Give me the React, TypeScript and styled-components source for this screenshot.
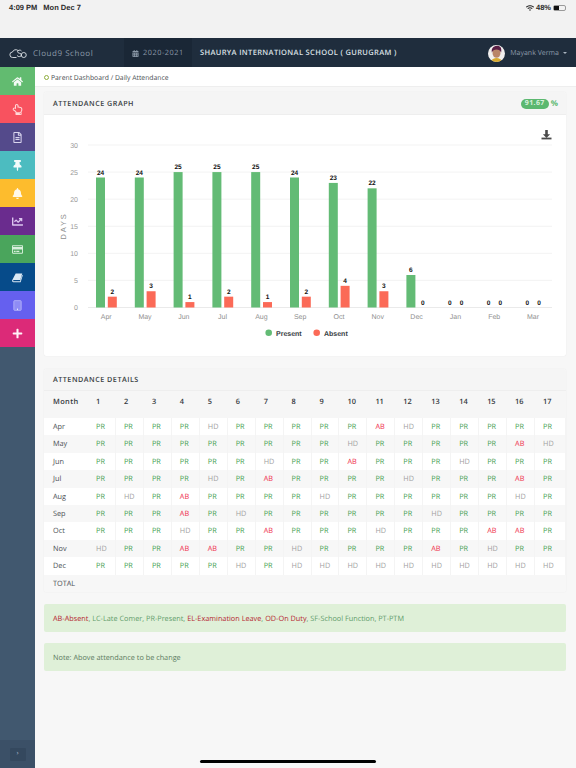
import styled, { createGlobalStyle } from 'styled-components';
import {
  FaBell,
  FaCalendarAlt,
  FaChartLine,
  FaHome,
  FaPlus,
  FaRegCreditCard,
  FaRegFileAlt,
  FaRegHandPointUp,
  FaThumbtack,
  FaWifi,
} from 'react-icons/fa';

const GlobalStyle = createGlobalStyle`
  html, body {
    margin: 0;
    padding: 0;
    background: #f7f7f7;
    font-family: "Open Sans", "Liberation Sans", sans-serif;
    text-rendering: geometricPrecision;
    -webkit-font-smoothing: antialiased;
  }
`;

const Page = styled.div`
  position: relative;
  width: 576px;
  height: 768px;
  overflow: hidden;
  display: flex;
  flex-direction: column;
`;

const StatusBar = styled.div`
  height: 38px;
  flex: none;
  box-sizing: border-box;
  padding: 3px 10px 0 9px;
  background: #f2f2f2;
  display: flex;
  justify-content: space-between;
  align-items: flex-start;
  font-family: "Liberation Sans", sans-serif;
  font-size: 7.5px;
  line-height: 9px;
  font-weight: 700;
  color: #2b2b2b;
`;

const StatusGroup = styled.div`
  display: flex;
  align-items: center;
  gap: ${(p: { $gap: number }) => p.$gap}px;
`;

const Battery = styled.span`
  position: relative;
  width: 13px;
  height: 6px;
  box-sizing: border-box;
  border: 1px solid #9a9a9a;
  border-radius: 2px;
  display: block;
  &::before {
    content: '';
    display: block;
    width: 5px;
    height: 4px;
    background: #111;
  }
`;

const TopBar = styled.header`
  height: 29px;
  flex: none;
  background: #1f2d3d;
  display: flex;
  align-items: stretch;
`;

const Brand = styled.div`
  width: 124px;
  box-sizing: border-box;
  padding: 1px 0 0 9px;
  display: flex;
  align-items: center;
  gap: 6px;
  font-size: 8px;
  letter-spacing: 0.55px;
  color: #8b99a8;
`;

const YearBox = styled.div`
  width: 68px;
  box-sizing: border-box;
  padding: 1px 0 0 8px;
  background: #1a2736;
  display: flex;
  align-items: center;
  gap: 4px;
  font-size: 7.3px;
  letter-spacing: 0.55px;
  color: #8b99a8;
  svg {
    width: 7px;
    height: 7px;
  }
`;

const SchoolName = styled.div`
  flex: 1;
  padding: 1px 0 0 8px;
  display: flex;
  align-items: center;
  font-size: 7.5px;
  font-weight: 600;
  letter-spacing: 0.35px;
  color: #dde2e7;
`;

const UserMenu = styled.div`
  padding: 1px 9px 0 0;
  display: flex;
  align-items: center;
  font-size: 7px;
  color: #8b99a8;
`;

const Avatar = styled.svg`
  width: 17px;
  height: 17px;
  margin-right: 5px;
  border-radius: 50%;
`;

const Caret = styled.span`
  margin-left: 4px;
  width: 0;
  height: 0;
  border-left: 2px solid transparent;
  border-right: 2px solid transparent;
  border-top: 2px solid #a9b4bf;
`;

const Body = styled.div`
  flex: 1;
  display: flex;
  min-height: 0;
`;

const Sidebar = styled.nav`
  width: 35px;
  flex: none;
  background: #41586f;
  display: flex;
  flex-direction: column;
`;

const SideItem = styled.div<{ $bg: string; $fg: string }>`
  height: 28px;
  flex: none;
  background: ${(p) => p.$bg};
  color: ${(p) => p.$fg};
  display: flex;
  align-items: center;
  justify-content: center;
  svg {
    width: 11px;
    height: 11px;
  }
`;

const SideFooter = styled.div`
  margin-top: auto;
  height: 28px;
  background: #3b5067;
  display: flex;
  align-items: center;
  justify-content: center;
`;

const ToggleButton = styled.div`
  width: 16px;
  height: 13px;
  border-radius: 1px;
  background: #34485e;
  color: #a8b6c4;
  font-size: 7px;
  line-height: 12px;
  text-align: center;
`;

const Main = styled.main`
  flex: 1;
  min-width: 0;
  display: flex;
  flex-direction: column;
`;

const Crumbs = styled.div`
  height: 20px;
  flex: none;
  box-sizing: border-box;
  padding: 1px 0 0 9px;
  background: #fff;
  border-bottom: 1px solid #eeeeee;
  display: flex;
  align-items: center;
  gap: 2px;
  font-size: 6.8px;
  color: #4b4f53;
`;

const CrumbDot = styled.span`
  width: 5px;
  height: 5px;
  box-sizing: border-box;
  border: 1px solid #8fae3f;
  border-radius: 50%;
`;

const Content = styled.div`
  padding: 5px 10px 0 9px;
  display: flex;
  flex-direction: column;
`;

const Panel = styled.section<{ $mb: number }>`
  margin-bottom: ${(p) => p.$mb}px;
  background: #fff;
  border-radius: 2px;
  box-shadow: 0 0 1px rgba(0, 0, 0, 0.12);
  overflow: hidden;
`;

const PanelHead = styled.div<{ $h: number }>`
  height: ${(p) => p.$h}px;
  box-sizing: border-box;
  padding: 1px 8px 0 9px;
  background: #f5f5f5;
  border-bottom: 1px solid #eeeeee;
  display: flex;
  align-items: center;
  justify-content: space-between;
`;

const PanelTitle = styled.h3`
  margin: 0;
  font-size: 7.2px;
  font-weight: 600;
  letter-spacing: 0.5px;
  color: #3a3f44;
`;

const Percent = styled.div`
  display: flex;
  align-items: center;
  gap: 2px;
  font-size: 8px;
  font-weight: 700;
  color: #5cb870;
`;

const Pill = styled.span`
  height: 10px;
  padding: 0 4px;
  border-radius: 5px;
  background: #5cb870;
  color: #d8f0dd;
  font-size: 7px;
  line-height: 10px;
  letter-spacing: 0.4px;
`;

const ChartSvg = styled.svg`
  display: block;
  width: 522px;
  height: 241px;
  font-family: "Liberation Sans", sans-serif;
`;

const AttendanceGrid = styled.div`
  display: grid;
  grid-template-columns: 44px repeat(16, 27.94px) 1fr;
  grid-template-rows: 27px;
  grid-auto-rows: 17.4px;
  background: #f6f6f6;
  font-size: 7.3px;
`;

const HeadCell = styled.div<{ $first?: boolean }>`
  box-sizing: border-box;
  padding: 6px 0 0 ${(p) => (p.$first ? 9 : 8)}px;
  font-size: 7.4px;
  line-height: 11px;
  font-weight: 600;
  letter-spacing: ${(p) => (p.$first ? 0.4 : 0)}px;
  color: #33383d;
`;

const MonthCell = styled.div<{ $odd: boolean }>`
  box-sizing: border-box;
  padding: 1px 0 0 9px;
  line-height: 17.4px;
  background: ${(p) => (p.$odd ? '#ffffff' : '#f7f7f7')};
  color: #4a4f54;
`;

const statusColor: Record<string, string> = {
  PR: '#43a04f',
  AB: '#ef2f4d',
  HD: '#a0a0a0',
};

const DayCell = styled.div<{ $odd: boolean; $status: string }>`
  box-sizing: border-box;
  padding: 1px 0 0 8px;
  line-height: 17.4px;
  font-weight: 500;
  background: ${(p) => (p.$odd ? '#ffffff' : '#f7f7f7')};
  border-right: 1px solid #f4f4f4;
  color: ${(p) => statusColor[p.$status]};
`;

const TotalRow = styled.div`
  grid-column: 1 / -1;
  box-sizing: border-box;
  padding: 1px 0 0 9px;
  line-height: 17.4px;
  background: #f7f7f7;
  color: #4a4f54;
`;

const Alert = styled.div<{ $mb: number }>`
  height: 28.5px;
  box-sizing: border-box;
  margin-bottom: ${(p) => p.$mb}px;
  padding: 1px 0 0 9px;
  background: #dff0d8;
  border-radius: 2px;
  display: flex;
  align-items: center;
  font-size: 7.3px;
  color: #5f9c6b;
  white-space: pre;
`;

const Danger = styled.span`
  color: #b5252f;
`;

const Note = styled.span`
  color: #5d7b62;
`;

const HomeBar = styled.div`
  position: absolute;
  left: 200px;
  bottom: 5px;
  width: 176px;
  height: 3px;
  border-radius: 2px;
  background: #000;
`;

const BookIcon = () => (
  <svg viewBox="0 0 12 12" fill="currentColor">
    <path d="M4 1.5h7.2L9 8.6H2.2c-.9 0-1.4.9-.8 1.5h7.3l2.5-7 .6.5-2.4 7.6H1.5C.4 11.2-.2 10 .3 8.8z" />
  </svg>
);

const TabletIcon = () => (
  <svg viewBox="0 0 12 12">
    <rect x="2" y="0.7" width="8" height="10.6" rx="0.8" fill="#8f8cf5" stroke="currentColor" strokeWidth="0.9" />
    <circle cx="6" cy="10" r="0.6" fill="#fff" />
  </svg>
);

const menu = [
  { bg: '#62bb70', fg: '#f4fbf5', icon: <FaHome /> },
  { bg: '#f8525f', fg: '#ffd9d9', icon: <FaRegHandPointUp /> },
  { bg: '#544a8b', fg: '#d9d5ee', icon: <FaRegFileAlt /> },
  { bg: '#4cbcc0', fg: '#f3fbfb', icon: <FaThumbtack /> },
  { bg: '#fdbc2d', fg: '#fff8e8', icon: <FaBell /> },
  { bg: '#6a2c8e', fg: '#dcc5ef', icon: <FaChartLine /> },
  { bg: '#4aa55c', fg: '#d8f0dc', icon: <FaRegCreditCard /> },
  { bg: '#064b8a', fg: '#dbe9f5', icon: <BookIcon /> },
  { bg: '#6560ef', fg: '#b9b6fa', icon: <TabletIcon /> },
  { bg: '#dc2a78', fg: '#fff2f7', icon: <FaPlus /> },
];

const months = ['Apr', 'May', 'Jun', 'Jul', 'Aug', 'Sep', 'Oct', 'Nov', 'Dec', 'Jan', 'Feb', 'Mar'];
const present = [24, 24, 25, 25, 25, 24, 23, 22, 6, 0, 0, 0];
const absent = [2, 3, 1, 2, 1, 2, 4, 3, 0, 0, 0, 0];

const rows: [string, string][] = [
  ['Apr', 'PR PR PR PR HD PR PR PR PR PR AB HD PR PR PR PR PR'],
  ['May', 'PR PR PR PR PR PR PR PR PR HD PR PR PR PR PR AB HD'],
  ['Jun', 'PR PR PR PR PR PR HD PR PR AB PR PR PR HD PR PR PR'],
  ['Jul', 'PR PR PR PR HD PR AB PR PR PR PR HD PR PR PR AB PR'],
  ['Aug', 'PR HD PR AB PR PR PR PR HD PR PR PR PR PR PR HD PR'],
  ['Sep', 'PR PR PR AB PR HD PR PR PR PR PR PR HD PR PR PR PR'],
  ['Oct', 'PR PR PR HD PR PR AB PR PR PR HD PR PR PR AB AB PR'],
  ['Nov', 'HD PR PR AB AB PR PR HD PR PR PR PR AB PR HD PR PR'],
  ['Dec', 'PR PR PR PR PR HD PR HD HD HD HD HD HD HD HD HD HD'],
];

const days = Array.from({ length: 17 }, (_, i) => i + 1);

const toY = (v: number) => 307.5 - v * (162.5 / 30);
const STEP = 38.8;

const Logo = () => (
  <svg width="18" height="11" viewBox="0 0 36 22" fill="none" stroke="#dfe4e9" strokeWidth="1.8">
    <path d="M15 19H7.5a5.5 5.5 0 0 1 -.5 -11 A7 7 0 0 1 18 5" />
    <path d="M25 6c-2-3-8-2-8 1.500 0 4 8 2 8 6.500 0 3.500-7 4.500-9 1" />
    <circle cx="29.500" cy="14" r="5" />
  </svg>
);

const Chart = () => (
  <ChartSvg viewBox="44 115 522 241">
    {[0, 5, 10, 15, 20, 25, 30].map((v) => (
      <g key={v}>
        <line x1="88" x2="552" y1={toY(v)} y2={toY(v)} stroke={v === 0 ? '#e4e4e4' : '#f0f0f0'} strokeWidth="0.8" />
        <text x="78" y={toY(v) + 2.5} textAnchor="end" fontSize="7" fill="#9a9a9a">
          {v}
        </text>
      </g>
    ))}
    <text
      transform="translate(66 226) rotate(-90)"
      textAnchor="middle"
      fontSize="7.5"
      letterSpacing="1.8"
      fill="#8e8e8e"
    >
      DAYS
    </text>
    {months.map((m, i) => {
      const gx = 96 + i * STEP;
      const rx = gx + 11.8;
      return (
        <g key={m}>
          <rect x={gx} y={toY(present[i])} width="9" height={present[i] * (162.5 / 30)} fill="#63bb75" />
          <rect x={rx} y={toY(absent[i])} width="9" height={absent[i] * (162.5 / 30)} fill="#fb6a57" />
          <text x={gx + 4.5} y={toY(present[i]) - 3} textAnchor="middle" fontSize="6.5" fontWeight="700" fill="#111">
            {present[i]}
          </text>
          <text x={rx + 4.5} y={toY(absent[i]) - 3} textAnchor="middle" fontSize="6.5" fontWeight="700" fill="#111">
            {absent[i]}
          </text>
          <text x={gx + 10.2} y="318.5" textAnchor="middle" fontSize="7" fill="#8f8f8f">
            {m}
          </text>
        </g>
      );
    })}
    <circle cx="268.7" cy="332.8" r="3.3" fill="#63bb75" />
    <text x="276" y="335.5" fontSize="7" fontWeight="700" fill="#373d3f">
      Present
    </text>
    <circle cx="316.7" cy="332.8" r="3.3" fill="#fb6a57" />
    <text x="324" y="335.5" fontSize="7" fontWeight="700" fill="#373d3f">
      Absent
    </text>
    <path d="M545.2 130h2.6v4.2h2.3l-3.6 3.8-3.6-3.8h2.3z" fill="#4a4a4a" />
    <rect x="541.5" y="137.6" width="10" height="1.8" fill="#4a4a4a" />
  </ChartSvg>
);

const App = () => {
  return (
    <Page>
      <GlobalStyle />
      <StatusBar>
        <StatusGroup $gap={6}>
          <span>4:09 PM</span>
          <span>Mon Dec 7</span>
        </StatusGroup>
        <StatusGroup $gap={2}>
          <FaWifi size={8} />
          <span>48%</span>
          <Battery />
        </StatusGroup>
      </StatusBar>
      <TopBar>
        <Brand>
          <Logo />
          Cloud9 School
        </Brand>
        <YearBox>
          <FaCalendarAlt />
          2020-2021
        </YearBox>
        <SchoolName>SHAURYA INTERNATIONAL SCHOOL ( GURUGRAM )</SchoolName>
        <UserMenu>
          <Avatar viewBox="0 0 17 17">
            <rect width="17" height="17" fill="#f1efee" />
            <ellipse cx="8.5" cy="8" rx="4" ry="4.8" fill="#b98468" />
            <path d="M3.8 7.5C3 2 7 .8 9.5 .8s4.5 2 3.7 6.7c-1-2-2.5-3-4.7-3S4.8 5.5 3.8 7.5z" fill="#5a1f45" />
            <path d="M3 17c.5-3 3-4 5.5-4s5 1 5.5 4z" fill="#d7a92e" />
          </Avatar>
          Mayank Verma
          <Caret />
        </UserMenu>
      </TopBar>
      <Body>
        <Sidebar>
          {menu.map((item) => (
            <SideItem key={item.bg} $bg={item.bg} $fg={item.fg}>
              {item.icon}
            </SideItem>
          ))}
          <SideFooter>
            <ToggleButton>›</ToggleButton>
          </SideFooter>
        </Sidebar>
        <Main>
          <Crumbs>
            <CrumbDot />
            Parent Dashboard / Daily Attendance
          </Crumbs>
          <Content>
            <Panel $mb={13}>
              <PanelHead $h={23}>
                <PanelTitle>ATTENDANCE GRAPH</PanelTitle>
                <Percent>
                  <Pill>91.67</Pill>%
                </Percent>
              </PanelHead>
              <Chart />
            </Panel>
            <Panel $mb={12}>
              <PanelHead $h={22}>
                <PanelTitle>ATTENDANCE DETAILS</PanelTitle>
              </PanelHead>
              <AttendanceGrid>
                <HeadCell $first>Month</HeadCell>
                {days.map((d) => (
                  <HeadCell key={d}>{d}</HeadCell>
                ))}
                {rows.map(([month, line], r) =>
                  [
                    <MonthCell key={month} $odd={r % 2 === 0}>
                      {month}
                    </MonthCell>,
                  ].concat(
                    line.split(' ').map((s, i) => (
                      <DayCell key={month + i} $odd={r % 2 === 0} $status={s}>
                        {s}
                      </DayCell>
                    )),
                  ),
                )}
                <TotalRow>TOTAL</TotalRow>
              </AttendanceGrid>
            </Panel>
            <Alert $mb={10.5}>
              <Danger>AB-Absent</Danger>, LC-Late Comer, PR-Present, <Danger>EL-Examination Leave</Danger>,{' '}
              <Danger>OD-On Duty</Danger>, SF-School Function, PT-PTM
            </Alert>
            <Alert $mb={0}>
              <Note>Note: Above attendance to be change</Note>
            </Alert>
          </Content>
        </Main>
      </Body>
      <HomeBar />
    </Page>
  );
};

export default App;
